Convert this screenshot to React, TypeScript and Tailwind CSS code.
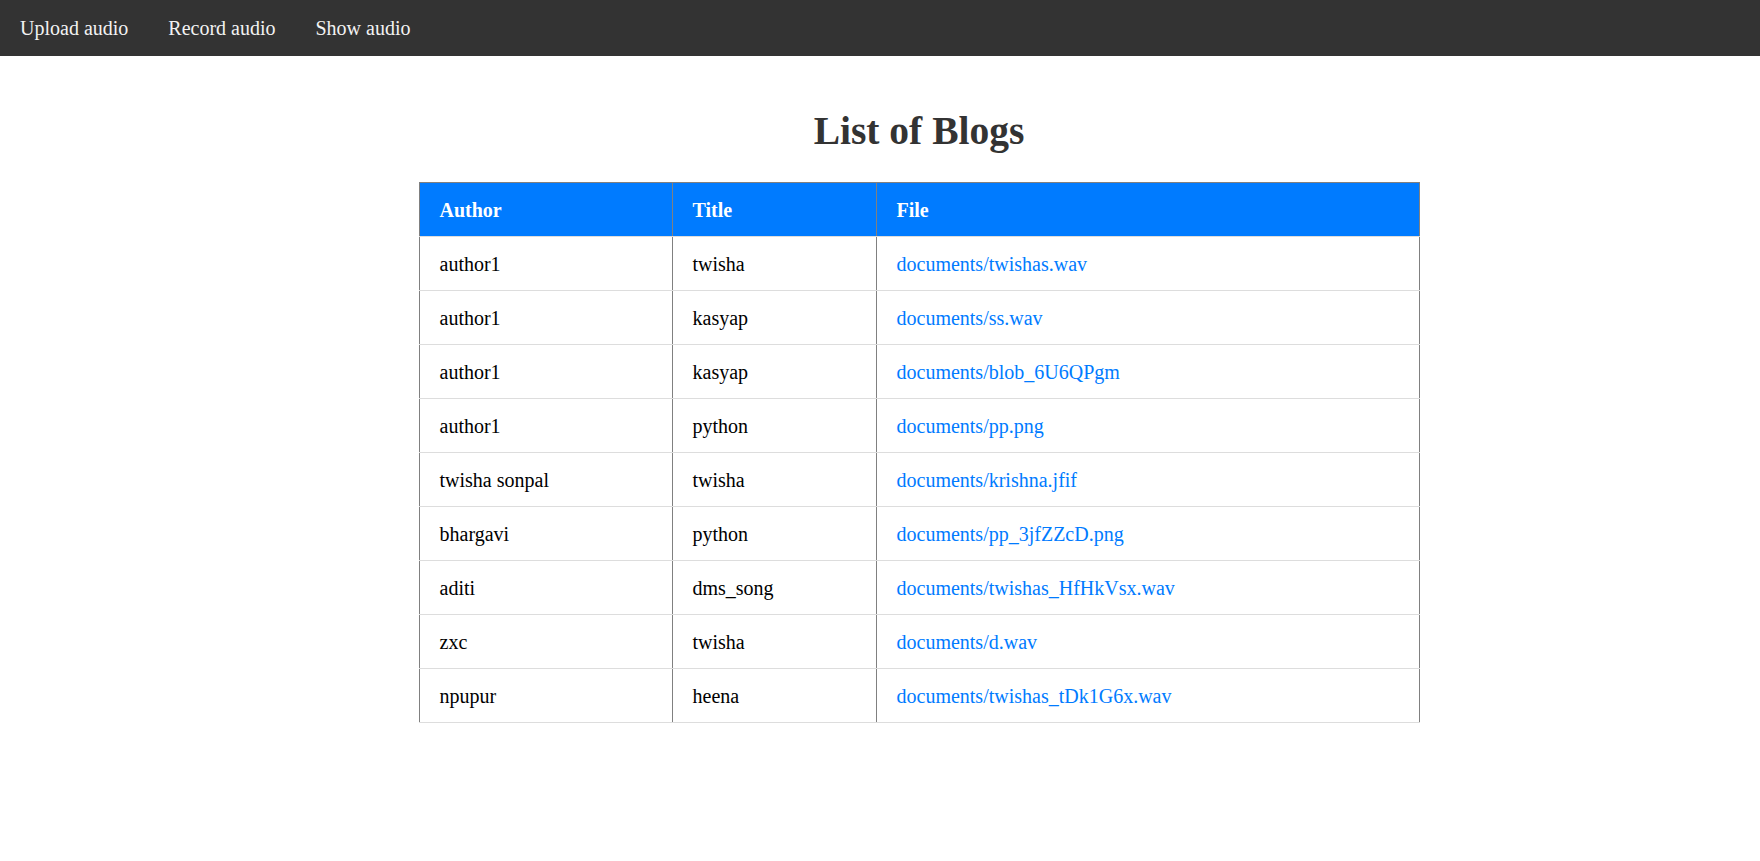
import React from 'react';

const rows = [
  { author: 'author1', title: 'twisha', file: 'documents/twishas.wav' },
  { author: 'author1', title: 'kasyap', file: 'documents/ss.wav' },
  { author: 'author1', title: 'kasyap', file: 'documents/blob_6U6QPgm' },
  { author: 'author1', title: 'python', file: 'documents/pp.png' },
  { author: 'twisha sonpal', title: 'twisha', file: 'documents/krishna.jfif' },
  { author: 'bhargavi', title: 'python', file: 'documents/pp_3jfZZcD.png' },
  { author: 'aditi', title: 'dms_song', file: 'documents/twishas_HfHkVsx.wav' },
  { author: 'zxc', title: 'twisha', file: 'documents/d.wav' },
  { author: 'npupur', title: 'heena', file: 'documents/twishas_tDk1G6x.wav' },
];

export default function App() {
  return (
    <div className="min-h-[861px] bg-white font-['Liberation_Serif','Times_New_Roman',serif]">
      <nav className="flex h-14 items-center bg-[#333333]">
        {['Upload audio', 'Record audio', 'Show audio'].map((label) => (
          <a key={label} href="#" className="px-5 text-[20px] text-[#f2f2f2]">
            {label}
          </a>
        ))}
      </nav>

      <div className="flex flex-col items-center pl-[78px]">
        <h1 className="mt-[53px] text-[39.5px] font-bold leading-[44px] text-[#333333]">List of Blogs</h1>

        <table className="mt-[29px] w-[1000px] table-fixed border-collapse text-[20px]">
          <colgroup>
            <col className="w-[253px]" />
            <col className="w-[204px]" />
            <col className="w-[543px]" />
          </colgroup>
          <thead>
            <tr className="h-[54px] bg-[#007bff] text-left text-white">
              <th className="border border-b-[#dddddd] border-[#808080] px-5 pt-px font-bold">Author</th>
              <th className="border border-b-[#dddddd] border-[#808080] px-5 pt-px font-bold">Title</th>
              <th className="border border-b-[#dddddd] border-[#808080] px-5 pt-px font-bold">File</th>
            </tr>
          </thead>
          <tbody>
            {rows.map((r, i) => (
              <tr key={i} className="h-[54px] text-black">
                <td className="border-x border-b border-x-[#808080] border-b-[#dddddd] px-5 pt-px">{r.author}</td>
                <td className="border-x border-b border-x-[#808080] border-b-[#dddddd] px-5 pt-px">{r.title}</td>
                <td className="border-x border-b border-x-[#808080] border-b-[#dddddd] px-5 pt-px">
                  <a href="#" className="text-[#007bff]">
                    {r.file}
                  </a>
                </td>
              </tr>
            ))}
          </tbody>
        </table>
      </div>
    </div>
  );
}
